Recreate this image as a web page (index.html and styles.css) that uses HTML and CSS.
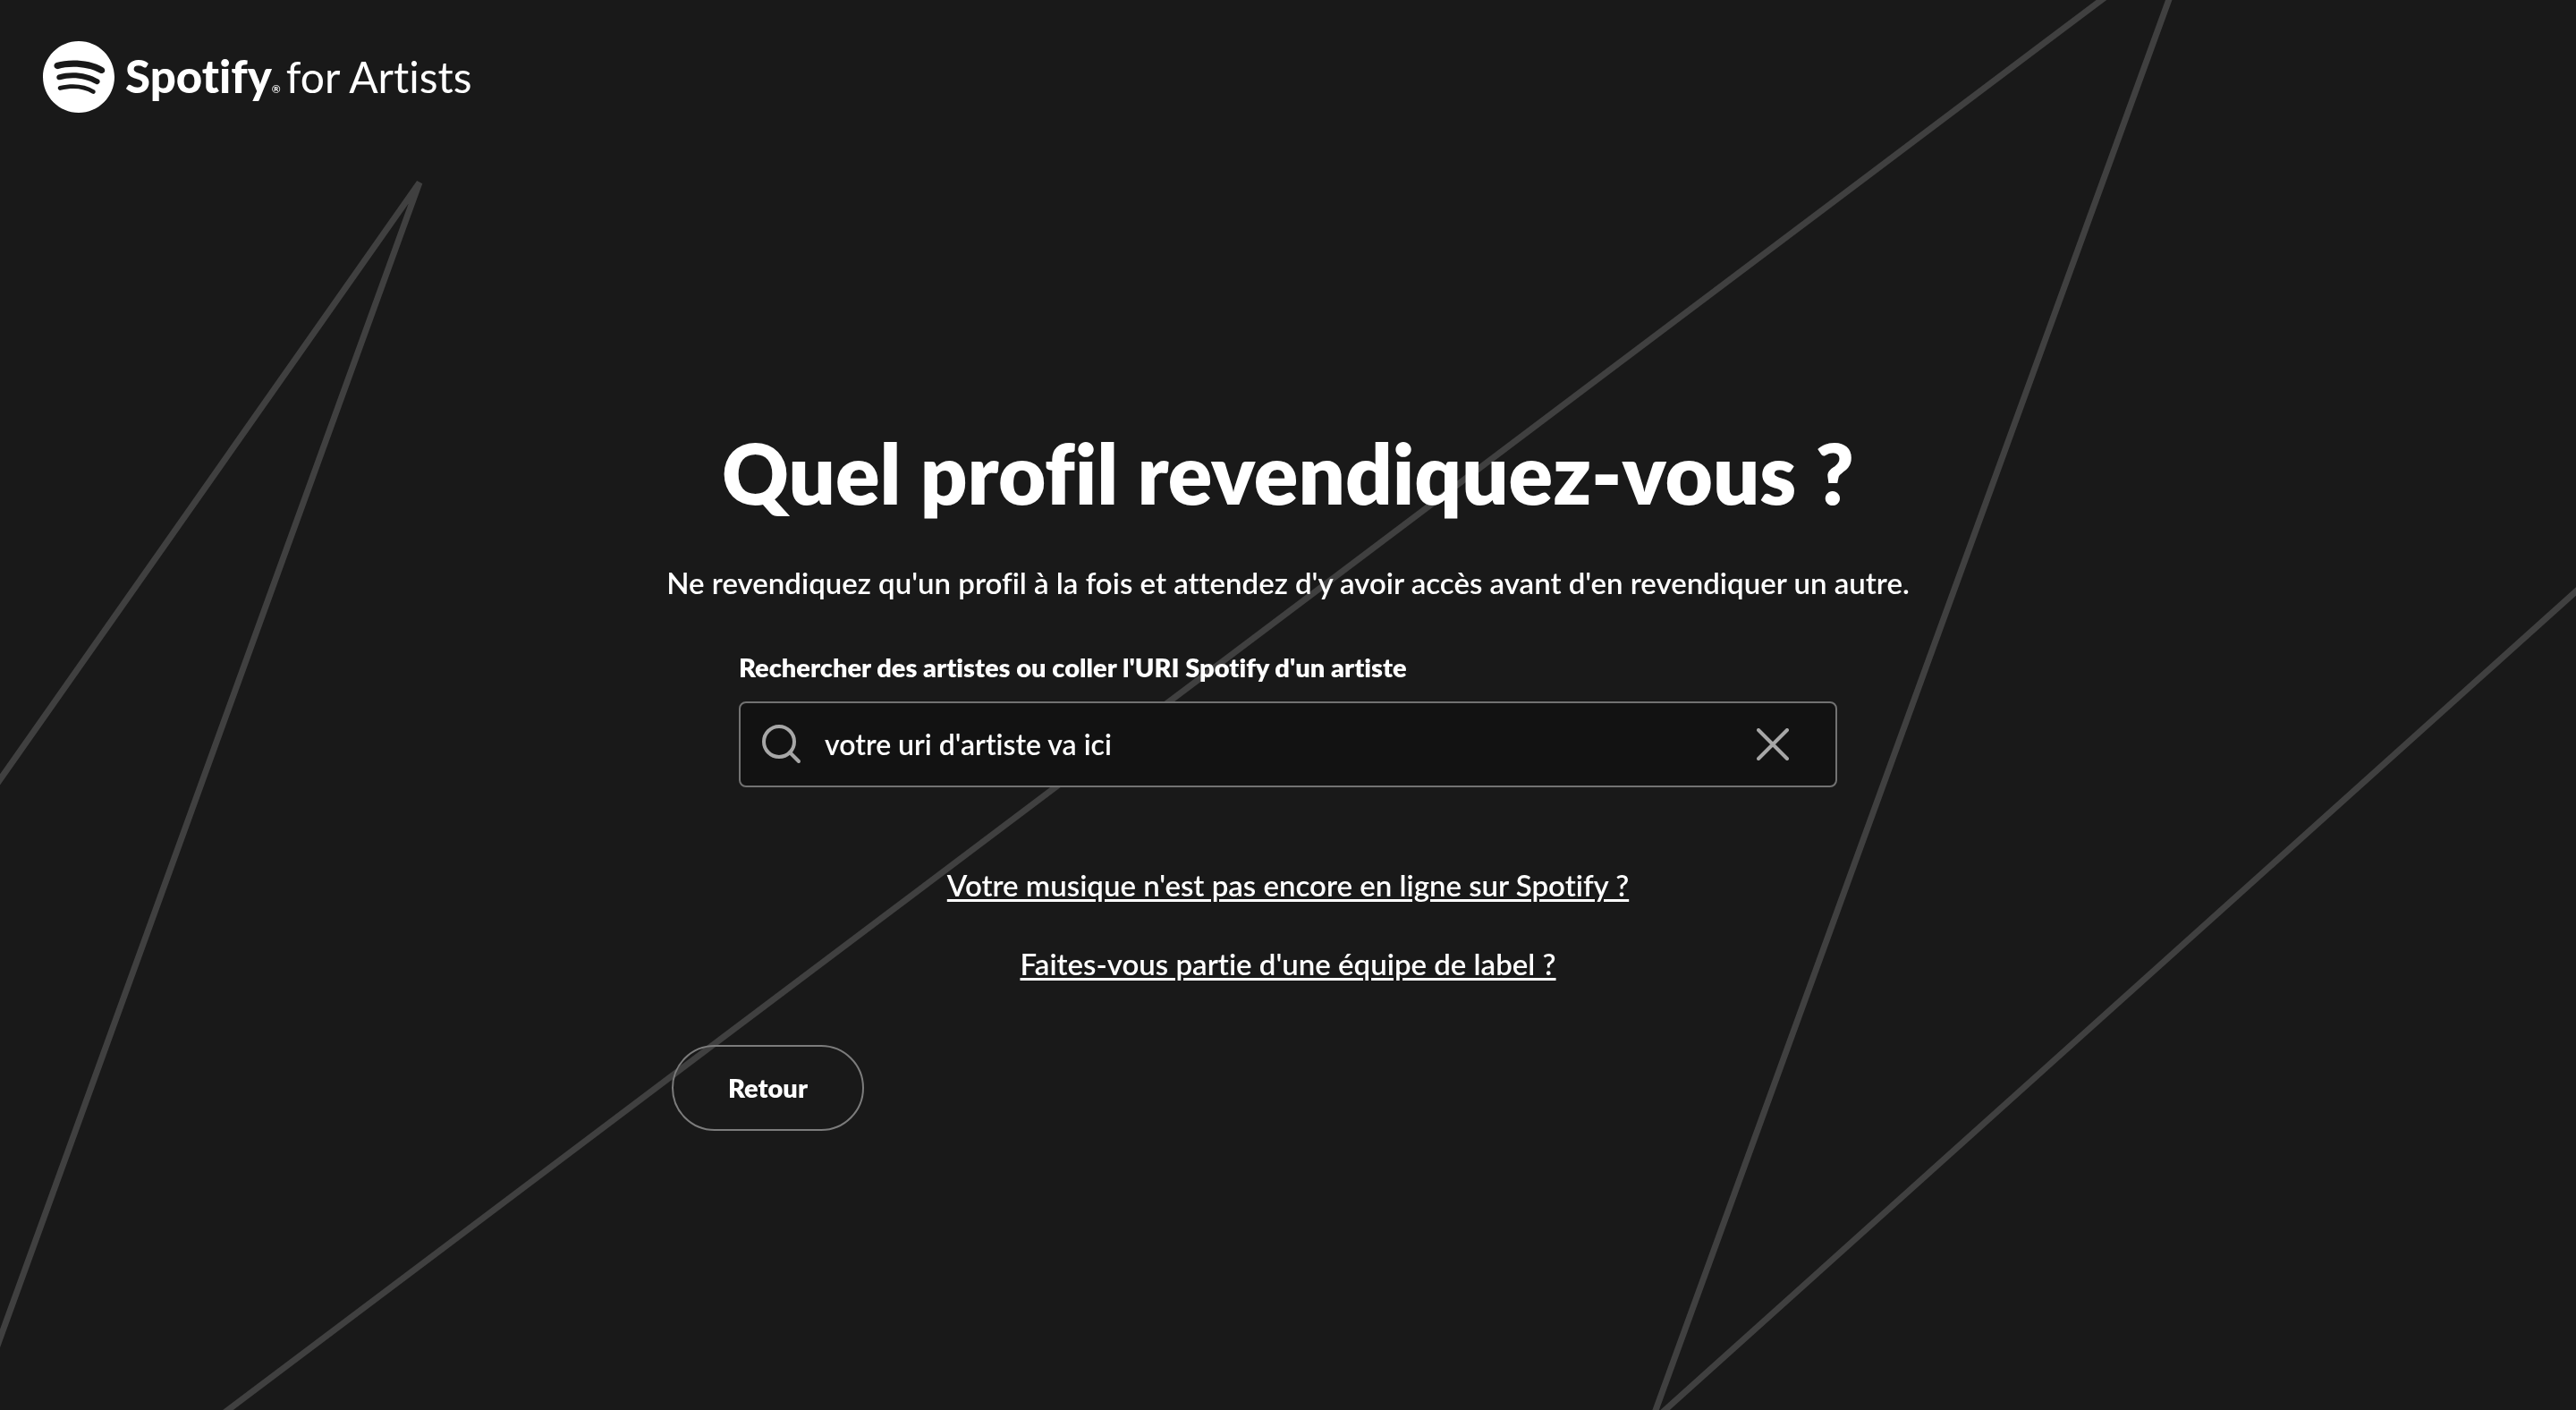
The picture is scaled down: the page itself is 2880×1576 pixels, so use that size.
FILE: index.html
```
<!DOCTYPE html>
<html lang="fr">
<head>
<meta charset="utf-8">
<meta name="viewport" content="width=device-width, initial-scale=1">
<title>Spotify for Artists</title>
<link rel="stylesheet" href="styles.css">
</head>
<body>
<svg class="backdrop" viewBox="0 0 2880 1576" preserveAspectRatio="xMidYMid slice" aria-hidden="true">
  <path d="M-70 971L469 204L-29 1576"/>
  <path d="M227 1597L2376 -20"/>
  <path d="M2432 -20L1846 1590L2910 634"/>
</svg>
<div class="page">
  <header class="header">
    <a class="logo" href="#" aria-label="Spotify for Artists">
      <svg class="logo-mark" viewBox="0 0 24 24" aria-hidden="true"><path d="M12 0C5.4 0 0 5.4 0 12s5.4 12 12 12 12-5.4 12-12S18.66 0 12 0zm5.521 17.34c-.24.359-.66.48-1.021.24-2.82-1.74-6.36-2.101-10.561-1.141-.418.122-.779-.179-.899-.539-.12-.421.18-.78.54-.9 4.56-1.021 8.52-.6 11.64 1.32.42.18.479.659.301 1.02zm1.44-3.3c-.301.42-.841.6-1.262.3-3.239-1.98-8.159-2.58-11.939-1.38-.479.12-1.02-.12-1.14-.6-.12-.48.12-1.021.6-1.141C9.6 9.9 15 10.561 18.72 12.84c.361.181.54.78.241 1.2zm.12-3.36C15.24 8.4 8.82 8.16 5.16 9.301c-.6.179-1.2-.181-1.38-.721-.18-.601.18-1.2.72-1.381 4.26-1.26 11.28-1.02 15.721 1.621.539.3.719 1.02.419 1.56-.299.421-1.02.599-1.559.3z"/></svg>
      <span class="logo-text"><span class="logo-brand">Spotify</span><span class="logo-registered">®</span><span class="logo-product">for Artists</span></span>
    </a>
  </header>
  <main class="main">
    <div class="content">
      <h1 class="title">Quel profil revendiquez-vous ?</h1>
      <p class="subtitle">Ne revendiquez qu'un profil à la fois et attendez d'y avoir accès avant d'en revendiquer un autre.</p>
      <form class="search">
        <label class="search-label" for="artist">Rechercher des artistes ou coller l'URI Spotify d'un artiste</label>
        <div class="search-box">
          <svg class="search-icon" viewBox="0 0 44 44" aria-hidden="true"><circle cx="19" cy="19" r="17"/><path d="M31 31L41 41"/></svg>
          <input class="search-input" id="artist" type="text" value="votre uri d'artiste va ici">
          <button class="search-clear" type="button" aria-label="Effacer">
            <svg class="clear-icon" viewBox="0 0 36 36" aria-hidden="true"><path d="M2 2L34 34M34 2L2 34"/></svg>
          </button>
        </div>
      </form>
      <nav class="links">
        <a class="link" href="#">Votre musique n'est pas encore en ligne sur Spotify ?</a>
        <a class="link" href="#">Faites-vous partie d'une équipe de label ?</a>
      </nav>
      <button class="back" type="button">Retour</button>
    </div>
  </main>
</div>
</body>
</html>
```
FILE: styles.css
```
* {
  box-sizing: border-box;
}

body {
  margin: 0;
  background: #191919;
  color: #fff;
  font-family: Lato, "Liberation Sans", sans-serif;
  font-size: 33px;
  font-variant-ligatures: none;
  font-weight: 600;
  line-height: 48px;
}

.backdrop {
  position: fixed;
  inset: 0;
  z-index: -1;
  width: 100%;
  height: 100%;
  fill: none;
  stroke: #404040;
  stroke-width: 7;
  stroke-linejoin: bevel;
}

.page {
  display: flex;
  flex-direction: column;
  min-height: 100vh;
}

.header {
  display: flex;
  padding: 46px 48px 35px;
}

.logo {
  display: flex;
  align-items: center;
  gap: 12px;
  color: inherit;
  text-decoration: none;
}

.logo-mark {
  width: 80px;
  height: 80px;
  fill: #fff;
}

.logo-text {
  display: flex;
  align-items: baseline;
  padding-bottom: 4px;
  line-height: 1;
}

.logo-brand {
  font-size: 51px;
  font-weight: 900;
}

.logo-registered {
  font-size: 12px;
}

.logo-product {
  margin-left: 6px;
  font-size: 48px;
  font-weight: 400;
}

.main {
  display: flex;
  flex: 1;
  align-items: center;
  justify-content: center;
}

.content {
  display: flex;
  flex-direction: column;
  align-items: center;
  width: 100%;
  max-width: 1378px;
}

.title {
  margin: 0;
  font-size: 92px;
  font-weight: 800;
  line-height: 112px;
  white-space: nowrap;
}

.subtitle {
  margin: 42px 0 0;
  white-space: nowrap;
}

.search {
  display: flex;
  flex-direction: column;
  gap: 18px;
  width: 100%;
  max-width: 1228px;
  margin-top: 51px;
}

.search-label {
  font-size: 29px;
  font-weight: 800;
  line-height: 40px;
}

.search-box {
  display: flex;
  align-items: center;
  height: 96px;
  padding: 0 40px 0 24px;
  border: 2px solid #727272;
  border-radius: 8px;
  background: #121212;
}

.search-icon,
.clear-icon {
  flex: none;
  fill: none;
  stroke: #a7a7a7;
  stroke-width: 4;
  stroke-linecap: round;
}

.search-icon {
  width: 44px;
  height: 44px;
}

.search-input {
  flex: 1;
  min-width: 0;
  padding: 0 26px;
  border: 0;
  outline: 0;
  background: none;
  color: #fff;
  font: inherit;
  font-size: 32px;
}

.search-clear {
  display: flex;
  padding: 12px;
  border: 0;
  background: none;
}

.clear-icon {
  width: 36px;
  height: 36px;
}

.links {
  display: flex;
  flex-direction: column;
  align-items: center;
  gap: 40px;
  margin-top: 85px;
}

.link {
  color: #fff;
  text-decoration: underline;
  text-decoration-thickness: 3px;
  text-underline-offset: 3px;
}

.back {
  align-self: flex-start;
  height: 96px;
  margin-top: 67px;
  padding: 0 61px;
  border: 2px solid #7c7c7c;
  border-radius: 48px;
  background: none;
  color: #fff;
  font: inherit;
  font-size: 29px;
  font-weight: 800;
}
```
